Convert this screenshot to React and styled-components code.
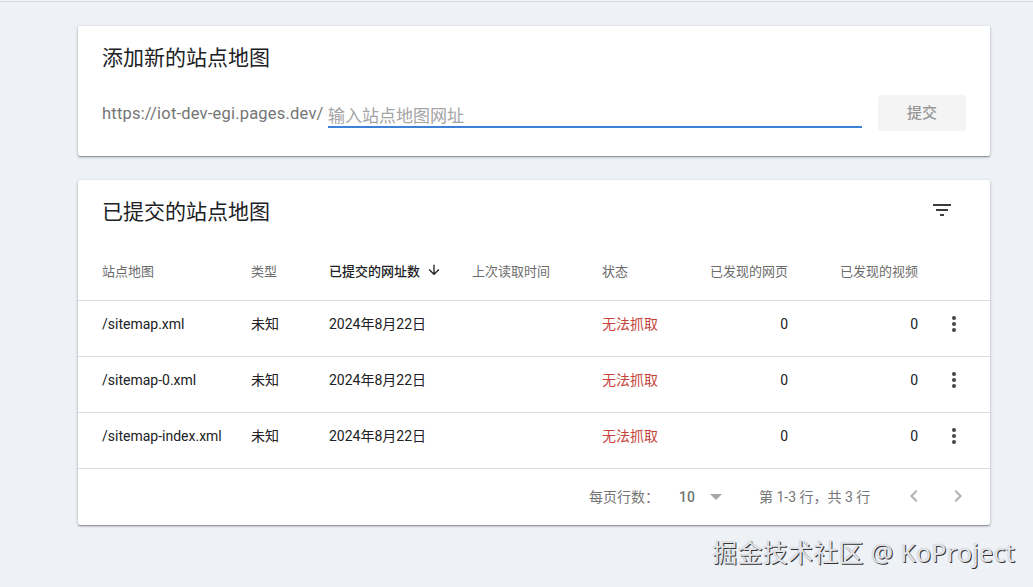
import React from 'react';
import styled, { createGlobalStyle } from 'styled-components';

const GlobalStyle = createGlobalStyle`
  * {
    box-sizing: border-box;
  }

  body {
    margin: 0;
    background: #eef1f6;
    color: #202124;
    font-family: Roboto, 'Noto Sans CJK SC', sans-serif;
  }
`;

const Page = styled.div`
  position: relative;
  height: 587px;
  padding: 0 43px 0 78px;
  overflow: hidden;
`;

const TopLine = styled.div`
  height: 2px;
  margin: 0 -43px 24px -78px;
  background: linear-gradient(#eef1f5 50%, #d9dce0 50%);
`;

const Card = styled.section`
  height: ${props => props.$height}px;
  margin-bottom: 24px;
  background: #fff;
  border-radius: 2px;
  box-shadow: 0 1px 1px rgba(0, 0, 0, 0.26), 0 1px 3px rgba(40, 50, 60, 0.34);
`;

const CardHeader = styled.header`
  display: flex;
  align-items: flex-start;
  justify-content: space-between;
  height: 63px;
  padding: 17px 36px 0 24px;
`;

const Title = styled.h2`
  margin: 0;
  font-size: 21px;
  font-weight: 400;
  line-height: 30px;
`;

const Form = styled.form`
  display: flex;
  align-items: flex-start;
  padding: 6px 24px 0;
`;

const Prefix = styled.label`
  width: 226px;
  color: #757575;
  font-size: 16.5px;
  letter-spacing: 0.2px;
  line-height: 37px;
  white-space: nowrap;
`;

const UrlInput = styled.input`
  width: 534px;
  height: 28px;
  margin: 5px 16px 0 0;
  padding: 5px 0 0;
  border: 0;
  border-bottom: 2px solid #3b82d6;
  border-radius: 0;
  background: transparent;
  font: inherit;
  font-size: 17px;
  line-height: 21px;
  outline: none;

  &::placeholder {
    color: #a4a4a4;
    opacity: 1;
  }
`;

const SubmitButton = styled.button`
  width: 88px;
  height: 36px;
  padding: 0 0 3px;
  border: 0;
  border-radius: 3px;
  background: #f4f4f4;
  color: #979797;
  font: inherit;
  font-size: 15px;
  font-weight: 500;
`;

const Row = styled.div`
  display: grid;
  grid-template-columns: 149px 78px 143px 130px 186px 130px 72px;
  align-items: center;
  height: ${props => (props.$head ? 58 : 56)}px;
  padding: ${props => (props.$head ? '1px 0 0' : '0 0 9px')} 24px;
  padding-right: 0;
  border-bottom: 1px solid #dadce0;
  color: ${props => (props.$head ? '#6b6b6b' : '#202124')};
  font-size: ${props => (props.$head ? 13 : 14)}px;
  line-height: 20px;
`;

const Cell = styled.span`
  display: flex;
  align-items: center;
  height: 20px;
  white-space: nowrap;
`;

const SortedCell = styled(Cell)`
  gap: 6px;
  color: #202124;
  font-weight: 500;

  svg {
    margin-bottom: 4px;
  }
`;

const StatusCell = styled(Cell)`
  color: #c5443a;
`;

const NumberCell = styled(Cell)`
  justify-content: flex-end;
`;

const SplitCell = styled.div`
  display: flex;
  align-items: center;
  justify-content: space-between;
`;

const MenuCell = styled(Cell)`
  justify-content: center;
`;

const Footer = styled.footer`
  display: flex;
  align-items: center;
  height: 55px;
  padding-left: 511px;
  color: #757575;
  font-size: 14px;
  line-height: 20px;
  white-space: nowrap;
`;

const FooterLabel = styled.span`
  width: 90px;
`;

const PageSize = styled.span`
  display: flex;
  align-items: center;
  gap: 15px;
  width: 80px;
  font-weight: 500;
`;

const Range = styled.span`
  width: 143px;
`;

const Pager = styled.span`
  display: flex;
  gap: 20px;

  svg {
    margin-bottom: 1px;
  }
`;

const Icon = styled.svg`
  display: block;
  flex: none;
  fill: currentColor;
`;

const Watermark = styled.div`
  position: absolute;
  right: 18px;
  bottom: 17px;
  color: #e2e4e8;
  font-family: 'Noto Sans', 'Noto Sans CJK SC', sans-serif;
  font-size: 25px;
  letter-spacing: 0.28px;
  line-height: 36px;
  text-shadow: 1px 1px 0 #333, 0 0 1px #bbb;
  white-space: nowrap;
`;

const rows = ['/sitemap.xml', '/sitemap-0.xml', '/sitemap-index.xml'];

const FilterIcon = () => (
  <Icon width='24' height='26' viewBox='0 0 24 24' color='#3c3c3c'>
    <path d='M10 18h4v-2h-4v2zM3 6v2h18V6H3zm3 7h12v-2H6v2z' />
  </Icon>
);

const SortIcon = () => (
  <Icon width='16' height='16' viewBox='0 0 24 24'>
    <path d='M20 12l-1.41-1.41L13 16.17V4h-2v12.17l-5.58-5.59L4 12l8 8 8-8z' />
  </Icon>
);

const MoreIcon = () => (
  <Icon width='24' height='24' viewBox='0 0 24 24' color='#444'>
    <circle cx='12' cy='6' r='2' />
    <circle cx='12' cy='12' r='2' />
    <circle cx='12' cy='18' r='2' />
  </Icon>
);

const Arrow = ({ next }) => (
  <Icon width='24' height='24' viewBox='0 0 24 24' color='#b2b2b2'>
    <path
      d={
        next
          ? 'M10 6L8.59 7.41 13.17 12l-4.58 4.59L10 18l6-6z'
          : 'M15.41 7.41L14 6l-6 6 6 6 1.41-1.41L10.83 12z'
      }
    />
  </Icon>
);

const SitemapRow = ({ path }) => (
  <Row>
    <Cell>{path}</Cell>
    <Cell>未知</Cell>
    <Cell>2024年8月22日</Cell>
    <Cell />
    <SplitCell>
      <StatusCell>无法抓取</StatusCell>
      <NumberCell>0</NumberCell>
    </SplitCell>
    <NumberCell>0</NumberCell>
    <MenuCell><MoreIcon /></MenuCell>
  </Row>
);

const App = () => (
  <>
    <GlobalStyle />
    <Page>
      <TopLine />
      <Card $height={130}>
        <CardHeader>
          <Title>添加新的站点地图</Title>
        </CardHeader>
        <Form>
          <Prefix htmlFor='sitemap'>https://iot-dev-egi.pages.dev/</Prefix>
          <UrlInput id='sitemap' placeholder='输入站点地图网址' />
          <SubmitButton type='button' disabled>提交</SubmitButton>
        </Form>
      </Card>
      <Card $height={345}>
        <CardHeader>
          <Title>已提交的站点地图</Title>
          <FilterIcon />
        </CardHeader>
        <Row $head>
          <Cell>站点地图</Cell>
          <Cell>类型</Cell>
          <SortedCell>已提交的网址数<SortIcon /></SortedCell>
          <Cell>上次读取时间</Cell>
          <SplitCell>
            <Cell>状态</Cell>
            <NumberCell>已发现的网页</NumberCell>
          </SplitCell>
          <NumberCell>已发现的视频</NumberCell>
        </Row>
        {rows.map(path => <SitemapRow key={path} path={path} />)}
        <Footer>
          <FooterLabel>每页行数：</FooterLabel>
          <PageSize>
            10
            <Icon width='12' height='6' viewBox='0 0 12 6' color='#a6a6a6'>
              <path d='M0 0h12L6 6z' />
            </Icon>
          </PageSize>
          <Range>第 1-3 行，共 3 行</Range>
          <Pager>
            <Arrow />
            <Arrow next />
          </Pager>
        </Footer>
      </Card>
      <Watermark>掘金技术社区 @ KoProject</Watermark>
    </Page>
  </>
);

export default App;
